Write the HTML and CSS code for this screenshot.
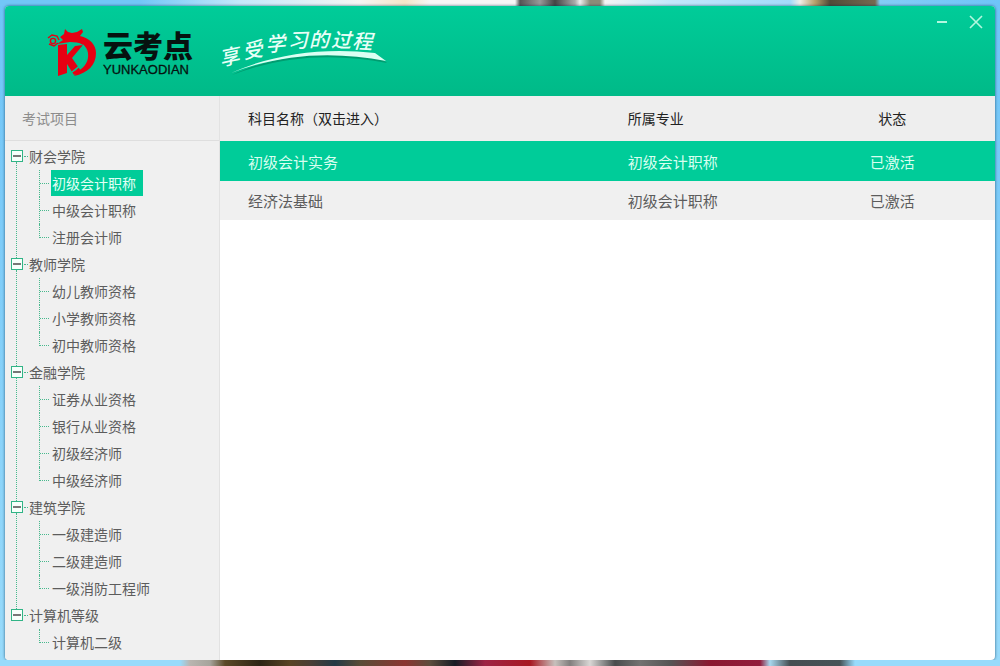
FILE: index.html
```html
<!DOCTYPE html>
<html lang="zh-CN">
<head>
<meta charset="utf-8">
<meta name="viewport" content="width=device-width, initial-scale=1">
<title>云考点</title>
<link rel="stylesheet" href="styles.css">
</head>
<body class="desktop">
<div class="wall wall-top"></div>
<div class="window">
  <header class="titlebar">
    <div class="brand">
      <svg class="brand-mark" viewBox="0 0 50 50" aria-hidden="true">
        <g fill="#e60012">
          <path d="M13 10 L17 7 L18 2 L21 5 L25 6 L30 5 L35 2 L36 5 L33 9 C43 11 49 18 49 26 C49 38 41 46 27 49 L31 44 C38 40 42 34 41 26 C40 18 33 15 23 15 L10 17 L16 13 Z"/>
          <path d="M11 18 L20 17 V28 L28 19 L36 18 L25 31 L34 44 L27 48 L20 37 V46 L11 49 Z"/>
        </g>
        <g fill="none" stroke="#e60012" stroke-width="1.4">
          <circle cx="6" cy="14" r="2.6"/>
          <path d="M1 11 L5 8 L10 9 L12 13 M2 17 L7 19 L11 16"/>
        </g>
        <path d="M36 18 C42 27 37 37 25 45" fill="none" stroke="#00c594" stroke-width="1.5"/>
      </svg>
      <div class="brand-text">
        <h1 class="brand-name">云考点</h1>
        <span class="brand-latin">YUNKAODIAN</span>
      </div>
    </div>
    <svg class="slogan" viewBox="0 0 174 60" role="img" aria-label="享受学习的过程">
      <path class="swoosh-shade" d="M17 57 C58 38 109 31 161 37 L172 45 C121 35 68 37 17 57Z"/>
      <path class="swoosh" d="M16 55 C58 36 109 29 160 35 L171 43 C120 33 68 35 16 55Z"/>
      <text class="slogan-text" x="6 29 51 73 94 116 137" y="48 41 34 30 29 29 30" rotate="-12 -10 -5 -2 0 2 3">享受学习的过程</text>
    </svg>
    <div class="controls">
      <button class="control" type="button" aria-label="最小化">
        <svg viewBox="0 0 14 14"><path d="M2 7H12" stroke-width="2"/></svg>
      </button>
      <button class="control" type="button" aria-label="关闭">
        <svg viewBox="0 0 14 14"><path d="M1 1L13 13M13 1L1 13" stroke-width="1.6"/></svg>
      </button>
    </div>
  </header>
  <div class="content">
    <nav class="sidebar">
      <h2 class="sidebar-title">考试项目</h2>
      <ul class="tree">
        <li class="group">
          <div class="group-row"><button class="toggle" type="button" aria-label="收起财会学院"></button><span class="group-name">财会学院</span></div>
          <ul class="branch">
            <li class="leaf"><a class="link selected" href="#">初级会计职称</a></li>
            <li class="leaf"><a class="link" href="#">中级会计职称</a></li>
            <li class="leaf"><a class="link" href="#">注册会计师</a></li>
          </ul>
        </li>
        <li class="group">
          <div class="group-row"><button class="toggle" type="button" aria-label="收起教师学院"></button><span class="group-name">教师学院</span></div>
          <ul class="branch">
            <li class="leaf"><a class="link" href="#">幼儿教师资格</a></li>
            <li class="leaf"><a class="link" href="#">小学教师资格</a></li>
            <li class="leaf"><a class="link" href="#">初中教师资格</a></li>
          </ul>
        </li>
        <li class="group">
          <div class="group-row"><button class="toggle" type="button" aria-label="收起金融学院"></button><span class="group-name">金融学院</span></div>
          <ul class="branch">
            <li class="leaf"><a class="link" href="#">证券从业资格</a></li>
            <li class="leaf"><a class="link" href="#">银行从业资格</a></li>
            <li class="leaf"><a class="link" href="#">初级经济师</a></li>
            <li class="leaf"><a class="link" href="#">中级经济师</a></li>
          </ul>
        </li>
        <li class="group">
          <div class="group-row"><button class="toggle" type="button" aria-label="收起建筑学院"></button><span class="group-name">建筑学院</span></div>
          <ul class="branch">
            <li class="leaf"><a class="link" href="#">一级建造师</a></li>
            <li class="leaf"><a class="link" href="#">二级建造师</a></li>
            <li class="leaf"><a class="link" href="#">一级消防工程师</a></li>
          </ul>
        </li>
        <li class="group">
          <div class="group-row"><button class="toggle" type="button" aria-label="收起计算机等级"></button><span class="group-name">计算机等级</span></div>
          <ul class="branch">
            <li class="leaf"><a class="link" href="#">计算机二级</a></li>
          </ul>
        </li>
      </ul>
    </nav>
    <main class="main">
      <table class="subjects">
        <colgroup><col class="col-name"><col class="col-major"><col class="col-state"></colgroup>
        <thead>
          <tr><th>科目名称（双击进入）</th><th>所属专业</th><th class="state">状态</th></tr>
        </thead>
        <tbody>
          <tr class="active"><td>初级会计实务</td><td>初级会计职称</td><td class="state">已激活</td></tr>
          <tr><td>经济法基础</td><td>初级会计职称</td><td class="state">已激活</td></tr>
        </tbody>
      </table>
    </main>
  </div>
</div>
<div class="wall wall-bottom"></div>
</body>
</html>
```
FILE: styles.css
```css
*, *::before { box-sizing: border-box; }

.desktop {
  margin: 0;
  min-height: 100vh;
  display: flex;
  flex-direction: column;
  background: linear-gradient(#6fc4f8, #98dbfb);
  font-family: "Noto Sans CJK SC", "Noto Sans", sans-serif;
  font-size: 14px;
  color: #5c5c5c;
}

.wall { flex: 0 0 6px; }
.wall-top {
  background: linear-gradient(90deg, #72c6f7 0 14%, #c5e8fa 24%, #f4f5f3 36%, #f4e5c8 40.5%, #f6f6f6 43%, #f6f6f6 51.5%, #555 52%, #999 54%, #444 55.5%, #aaa 57.5%, #eee 58%, #8c8b78 59%, #8c8b78 60%, #f4f4f4 60.5%, #c3e7fa 67%, #a3dafa 79%, #f0eee8 80%, #b7a06c 81.5%, #514a38 83%, #766950 87.5%, #84ccf6 88%, #6fc4f8);
}
.wall-bottom {
  background: linear-gradient(90deg, #98dbfb 0 18%, #b9b5b0 19%, #a7a49c 21%, #5b4927 22.5%, #2d2415 26%, #594424 29%, #4b3e35 31%, #243945 33.5%, #594c37 36%, #8b3531 40.5%, #5c4d3d 43%, #171c25 45.5%, #9d2445 48.5%, #a81822 53%, #c7c0bc 55.5%, #827f7e 57%, #d9d7d5 59%, #494c4d 61.5%, #737271 64%, #555 67%, #8a1830 71%, #921c3c 76%, #a8d8ee 77%, #454e52 79%, #465357 84%, #98dbfb 85.5%);
}

.window {
  flex: 1;
  margin: 0 5px;
  display: flex;
  flex-direction: column;
  border-radius: 4px;
  overflow: hidden;
  background: #fff;
  box-shadow: 0 0 3px rgba(0, 40, 70, 0.7);
}

/* Title bar */
.titlebar {
  height: 90px;
  display: flex;
  align-items: flex-start;
  padding-left: 42px;
  background: linear-gradient(#00cc99, #00ba88);
}
.brand {
  display: flex;
  align-items: flex-start;
  gap: 6px;
  padding-top: 21px;
}
.brand-mark { width: 50px; height: 50px; }
.brand-text {
  display: flex;
  flex-direction: column;
  color: #06120f;
}
.brand-name {
  margin: 0;
  font-size: 30px;
  font-weight: 900;
  line-height: 35px;
}
.brand-latin {
  font-family: "Liberation Sans", Arial, sans-serif;
  font-size: 13px;
  line-height: 16px;
  -webkit-text-stroke: 0.3px #06120f;
}
.slogan {
  width: 174px;
  height: 60px;
  margin: 12px 0 0 22px;
  overflow: visible;
}
.slogan-text {
  font-size: 20px;
  font-style: italic;
  font-weight: 500;
  fill: #e9fff7;
}
.swoosh { fill: #dcfff3; }
.swoosh-shade { fill: #009c70; }
.controls {
  display: flex;
  gap: 14px;
  margin-left: auto;
  padding: 6px 9px 0 0;
}
.control {
  width: 20px;
  height: 20px;
  padding: 3px;
  border: 0;
  background: none;
}
.control svg {
  display: block;
  width: 14px;
  height: 14px;
  fill: none;
  stroke: #b4f7df;
}

/* Body */
.content {
  flex: 1;
  display: flex;
}
.sidebar {
  flex: 0 0 215px;
  border-right: 1px solid #e2e2e2;
  background: #f0f0f0;
}
.sidebar-title {
  margin: 0;
  padding-left: 17px;
  border-bottom: 1px solid #dedede;
  background: #eee;
  color: #8c8c8c;
  font-size: 14px;
  font-weight: 400;
  line-height: 44px;
}
.tree,
.branch {
  margin: 0;
  padding: 0;
  list-style: none;
}
.tree { padding: 9px 0 0 6px; }

/* Tree rows are 27px apart; connectors are dotted borders */
.group-row {
  display: flex;
  align-items: center;
  height: 12px;
}
.group-row::before,
.leaf::before {
  content: "";
  border: 0 dotted #48b98d;
}
.group-row::before {
  order: 1;
  width: 4px;
  margin: 0 1px;
  border-top-width: 1px;
}
.group-name {
  order: 2;
  line-height: 12px;
  padding-bottom: 1px;
}
.toggle {
  width: 12px;
  height: 12px;
  padding: 0;
  border: 1px solid #31b486;
  background: linear-gradient(#777, #777) center / 8px 2px no-repeat #f7fffb;
}
.branch {
  margin-left: 5px;
  padding: 8px 0 7px 22px;
  border-left: 1px dotted #48b98d;
}
.group:last-child .branch {
  padding-bottom: 0;
  border-left-color: transparent;
}
.leaf {
  display: flex;
  align-items: flex-start;
  height: 27px;
  border-left: 1px dotted #48b98d;
}
.leaf::before {
  width: 9px;
  height: 14px;
  margin-right: 2px;
  border-bottom-width: 1px;
}
.leaf:last-child { border-left: 0; }
.leaf:last-child::before {
  width: 10px;
  border-left-width: 1px;
}
.link {
  padding: 0 7px 0 1px;
  color: #5c5c5c;
  line-height: 26px;
  text-decoration: none;
}
.selected {
  background: #00cc99;
  color: #e2fff5;
}

/* Subject table */
.main {
  flex: 1;
  min-width: 0;
}
.subjects {
  width: 100%;
  table-layout: fixed;
  border-collapse: collapse;
}
.col-name { width: 49%; }
.col-major { width: 25%; }
.col-state { width: 26%; }
.subjects th {
  height: 45px;
  padding: 0 0 2px 28px;
  background: #eee;
  color: #222;
  font-size: 14px;
  font-weight: 400;
  text-align: left;
}
.subjects td {
  height: 39px;
  padding: 0 0 0 28px;
  background: #f0f0f0;
  font-size: 15px;
}
.subjects .active td {
  height: 40px;
  background: #00cc99;
  color: #d8fff0;
}
.subjects .state {
  padding-left: 0;
  padding-right: 4px;
  text-align: center;
}
```
